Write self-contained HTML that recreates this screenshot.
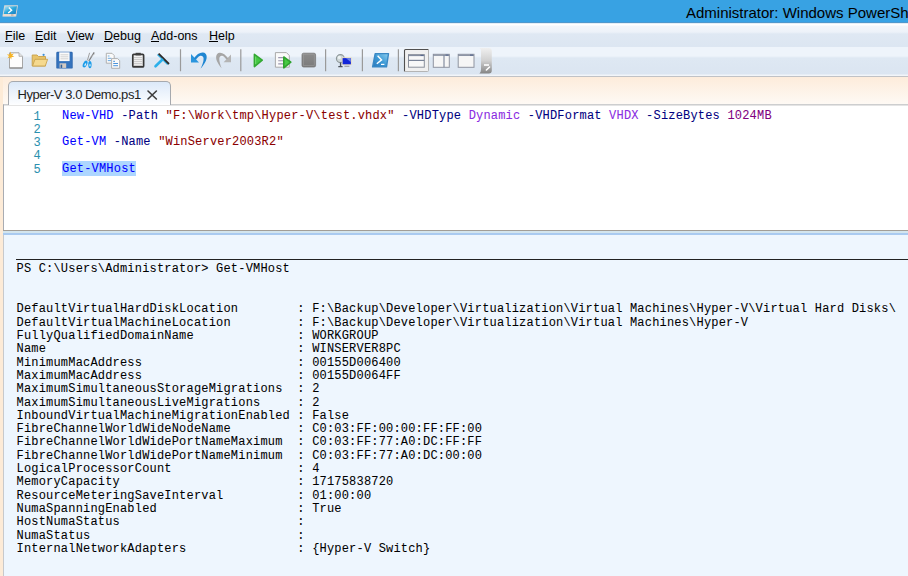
<!DOCTYPE html>
<html><head><meta charset="utf-8">
<style>
*{margin:0;padding:0;box-sizing:border-box}
html,body{width:908px;height:576px;overflow:hidden;background:#eef6fe;position:relative;font-family:"Liberation Sans",sans-serif}
.abs{position:absolute}
#title{left:0;top:0;width:908px;height:22px;background:linear-gradient(#38a2e3 0,#38a2e3 21px,#33a2ea 22px)}
#title .bl{left:0;top:22px;width:908px;height:1px;background:#4f98cc}
#titletext{left:686px;top:2.5px;font-size:15px;color:#000;white-space:nowrap;line-height:20px}
#menubar{left:0;top:23px;width:908px;height:24px;background:linear-gradient(#c9dcec 0px,#ffffff 1px,#ffffff 2px,#f2f6fb 3px,#edf2f9 9px,#dfe8f3 11px,#dce6f2 24px)}
#menubar span{position:absolute;top:6px;font-size:12.5px;line-height:15px;color:#000}
#menubar u{text-decoration:none;background:linear-gradient(#000,#000) no-repeat 0 12px/100% 1px}
#toolbar{left:0;top:47px;width:908px;height:29px;background:linear-gradient(#eef4fb 0px,#eef4fb 9px,#dee8f3 11px,#dbe5f1 27px,#f2f5f9 28px)}
#tbline{left:0;top:76px;width:908px;height:1px;background:#c0c2c6}
#tabarea{left:0;top:77px;width:908px;height:28px;background:linear-gradient(#fdecdb,#fefaf5)}
#lband{left:0;top:77px;width:3px;height:500px;background:#fdebd7}
#tab{left:8px;top:81px;width:163px;height:24px;border:1px solid #a6a9ae;border-bottom:none;border-radius:5px 5px 0 0;background:linear-gradient(#dce9f9,#fdfeff)}
#tabtext{left:17.5px;top:88px;font-size:13px;line-height:14px;color:#1e1e1e;white-space:nowrap;letter-spacing:-0.45px}
#tabx{left:147px;top:90px;width:11px;height:10px}
#edborder{left:3px;top:104px;width:905px;height:126px;border-top:1px solid #cdcecf;border-left:1px solid #a9acb2;background:#fff;box-shadow:inset 0 1px 0 #e4e4e4}
#edgap{left:9px;top:104px;width:161px;height:1px;background:#fdfeff}
#split1{left:3px;top:230px;width:905px;height:1px;background:#a29e97}
#split2{left:3px;top:231px;width:905px;height:2px;background:#d3e5ee}
#split3{left:3px;top:233px;width:905px;height:2px;background:#a9caf0}
#outpane{left:3px;top:235px;width:905px;height:341px;border-left:1px solid #c7c9cc;background:#eef6fe}
pre{font-family:"Liberation Mono",monospace;font-size:12px;letter-spacing:0.19px;white-space:pre;position:absolute;-webkit-text-stroke:0.05px}
#lnums{left:20px;top:110.5px;line-height:13.25px;color:#2b91af;text-align:right;width:21px}
#code{left:62px;top:109.5px;line-height:13.25px;color:#000}
.cmd{color:#0000ff}.par{color:#000080}.str{color:#8b0000}.enm{color:#8a2be2}.num{color:#800080}
.sel{background:#add6ff;padding:1px 0 0 0}
#hr{left:16px;top:259px;width:892px;height:1px;background:#222}
#out{left:16.5px;top:263.4px;line-height:13.31px;color:#000}
</style></head><body>
<div id="title" class="abs"><div class="abs bl"></div></div>
<div id="titletext" class="abs">Administrator: Windows PowerShell ISE</div>
<div id="menubar" class="abs">
<span style="left:5px"><u>F</u>ile</span>
<span style="left:35px"><u>E</u>dit</span>
<span style="left:67px"><u>V</u>iew</span>
<span style="left:104px"><u>D</u>ebug</span>
<span style="left:151px"><u>A</u>dd-ons</span>
<span style="left:209px"><u>H</u>elp</span>
</div>
<div id="toolbar" class="abs"></div>
<div id="tbline" class="abs"></div>
<div id="tabarea" class="abs"></div>
<div id="edborder" class="abs"></div>
<div id="outpane" class="abs"></div>
<div id="split1" class="abs"></div>
<div id="split2" class="abs"></div>
<div id="split3" class="abs"></div>
<div id="lband" class="abs"></div>
<div id="tab" class="abs"></div>
<div id="edgap" class="abs"></div>
<div id="tabtext" class="abs">Hyper-V 3.0 Demo.ps1</div>
<pre id="lnums">1
2
3
4
5</pre>
<pre id="code"><span class="cmd">New-VHD</span> <span class="par">-Path</span> <span class="str">"F:\Work\tmp\Hyper-V\test.vhdx"</span> <span class="par">-VHDType</span> <span class="enm">Dynamic</span> <span class="par">-VHDFormat</span> <span class="enm">VHDX</span> <span class="par">-SizeBytes</span> <span class="num">1024MB</span>

<span class="cmd">Get-VM</span> <span class="par">-Name</span> <span class="str">"WinServer2003R2"</span>

<span class="cmd sel">Get-VMHost</span></pre>
<!--ICONS--><svg class="abs" style="left:0;top:0" width="908" height="576" viewBox="0 0 908 576">
<defs>
<linearGradient id="psg" x1="1" y1="0" x2="0" y2="1"><stop offset="0" stop-color="#8fd0f0"/><stop offset="0.5" stop-color="#3d9ad6"/><stop offset="1" stop-color="#2a78bc"/></linearGradient>
<linearGradient id="tig" x1="0" y1="0" x2="1" y2="1"><stop offset="0" stop-color="#bfe8f8"/><stop offset="0.5" stop-color="#2aa8dc"/><stop offset="1" stop-color="#1a7cc0"/></linearGradient>
<linearGradient id="grip" x1="0" y1="0" x2="0" y2="1"><stop offset="0" stop-color="#f0f0f0"/><stop offset="0.5" stop-color="#d0d0d0"/><stop offset="1" stop-color="#858585"/></linearGradient>
<linearGradient id="stopg" x1="0" y1="0" x2="0" y2="1"><stop offset="0" stop-color="#8c8c8c"/><stop offset="1" stop-color="#7a7a7a"/></linearGradient>
</defs>
<!-- title icon -->
<path d="M4.3 5.3 H18 L16.2 16.6 H2.4 Z" fill="#dcd8d4"/>
<path d="M5.1 6.2 H17 L15.7 14 H3.7 Z" fill="url(#tig)"/>
<path d="M3.3 14.2 H15.7 L15.4 16.2 H2.9 Z" fill="#eadbd0"/>
<path d="M11 15 H13.5" stroke="#9a8f88" stroke-width="0.8"/>
<path d="M8.8 7.4 L11.6 10.2 L8.2 13" fill="none" stroke="#fff" stroke-width="1.4"/>
<!-- new -->
<path d="M9.5 52.8 H19 L22.5 56.3 V68 H9.5 Z" fill="#fdfdfd" stroke="#a6a6a6" stroke-width="1"/>
<path d="M19 52.8 V56.3 H22.5" fill="#e6e6e6" stroke="#a6a6a6" stroke-width="0.8"/>
<path d="M9.5 68 H22.5" stroke="#8c8c8c" stroke-width="1.2"/>
<path d="M10.6 51.6 L11.4 54.2 L14 53.4 L12.2 55.4 L14.4 57 L11.6 57 L11.2 59.6 L10 57.3 L7.4 58.4 L9 56 L6.8 54.6 L9.6 54.4 Z" fill="#f6b324"/>
<!-- open -->
<path d="M32.2 55 H37 L38.5 56.5 H45.5 V66 H32.2 Z" fill="#e8c46a" stroke="#c7a04a" stroke-width="0.9"/>
<path d="M32.5 66 L35 59.3 H47.6 L45.3 66 Z" fill="#f5d98e" stroke="#c9a450" stroke-width="0.9"/>
<circle cx="43.6" cy="54.8" r="1.1" fill="#3d8fd6"/>
<!-- save -->
<rect x="56.3" y="51.8" width="16.4" height="16.8" rx="1.2" fill="#2c65ad"/>
<rect x="57.2" y="52.6" width="14.6" height="15.2" fill="#3573bd"/>
<rect x="59.2" y="52.3" width="10.4" height="8.8" fill="#fbfbfb"/>
<path d="M60.5 54.8 H68.3 M60.5 56.8 H68.3 M60.5 58.8 H68.3" stroke="#c6c6c6" stroke-width="0.8"/>
<rect x="59.6" y="63.3" width="6.6" height="4.6" fill="#d4cbc3"/>
<rect x="60.6" y="64.6" width="1.6" height="3.3" fill="#2f5f9c"/>
<!-- cut -->
<path d="M88.8 61 L94.2 52.4" stroke="#7c7c7c" stroke-width="1.2"/>
<path d="M87.4 60.4 L89.6 52.8" stroke="#a0a0a0" stroke-width="1"/>
<path d="M90.4 56.8 L95 53.6" stroke="#b8b8b8" stroke-width="0.7"/>
<ellipse cx="85.1" cy="64" rx="2" ry="3.7" transform="rotate(25 85.1 64)" fill="#1c9ce9"/>
<ellipse cx="89.9" cy="64.6" rx="1.7" ry="3.6" fill="#1c9ce9"/>
<ellipse cx="85.3" cy="64.6" rx="0.7" ry="1.5" transform="rotate(25 85.3 64.6)" fill="#d8f0fc"/>
<ellipse cx="90" cy="65.2" rx="0.6" ry="1.4" fill="#d8f0fc"/>
<!-- copy -->
<path d="M106.3 53.3 H112 L114.2 55.5 V63.2 H106.3 Z" fill="#fbfbfb" stroke="#a9a9a9" stroke-width="0.9"/>
<path d="M107.8 56 H109.5 M107.8 58.3 H111.5 M107.8 60.6 H111.5" stroke="#5aa0e0" stroke-width="0.9"/>
<path d="M111.6 58.6 H117.6 L119.7 60.7 V68.3 H111.6 Z" fill="#fbfbfb" stroke="#a9a9a9" stroke-width="0.9"/>
<path d="M113.2 61.3 H115 M113.2 63.5 H118 M113.2 65.7 H118" stroke="#4a94dc" stroke-width="1"/>
<!-- paste -->
<rect x="132.8" y="54.3" width="10.8" height="12.6" rx="1" fill="#f3f3f3" stroke="#383838" stroke-width="1.7"/>
<rect x="135.6" y="52.8" width="5.2" height="2.6" fill="#404040"/>
<path d="M134 57.6 H142.4 M134 59.6 H142.4 M134 61.6 H142.4 M134 63.6 H142.4 M134 65.4 H142.4" stroke="#bdbdbd" stroke-width="0.8"/>
<!-- clear -->
<path d="M157.5 54.6 L167.7 64.6" stroke="#2fb2ea" stroke-width="1.4"/>
<path d="M158.6 53.6 L169 64" stroke="#2a2a2a" stroke-width="1.8"/>
<path d="M162.2 59.8 L155.5 66.3" stroke="#2cb0ea" stroke-width="2.6" stroke-linecap="round"/>
<!-- separators -->
<path d="M180.5 49.3 V71.3 M240.8 49.3 V71.3 M325.6 49.3 V71.3 M362.4 49.3 V71.3 M398.4 49.3 V71.3" stroke="#9a9a9a" stroke-width="1.2"/>
<!-- undo -->
<path d="M191 54 L191 62.6 L199 62.6 Z" fill="#2a95de"/>
<path d="M193.8 58.6 C196.5 54.5, 200 52.3, 203 52.6 C207 53, 207.5 57.5, 205.8 61 C204.5 63.8, 202.5 66.5, 200.6 68.6 C202 65.5, 203.8 61.5, 203.6 58.5 C203.4 56, 201.5 55.3, 199.8 56 C198.5 56.5, 197 58, 196 59.6 Z" fill="#1f86d2"/>
<!-- redo -->
<path d="M231 54.4 L231 62.3 L223.6 62.3 Z" fill="#b4b4b4"/>
<path d="M228.3 58.6 C225.7 54.6, 222.4 52.4, 219.6 52.7 C215.8 53.1, 215.6 57.6, 216.9 61 C218.1 63.8, 220 66.4, 221.6 68.3 C220.5 65.3, 219.1 61.4, 219.3 58.5 C219.6 56, 221.3 55.4, 222.8 56 C224 56.5, 225.5 58, 226.4 59.6 Z" fill="#a6a6a6"/>
<!-- run -->
<path d="M254.4 54.4 L262.2 60.2 L254.4 66.6 Z" fill="#45c843" stroke="#32a832" stroke-width="1.6" stroke-linejoin="round"/><path d="M255.6 56.6 L255.6 64" stroke="#7ee07a" stroke-width="0.8"/>
<!-- run selection -->
<path d="M275.4 52.6 H286.4 L289.3 55.5 V67.2 H275.4 Z" fill="#fafafa" stroke="#a2a2a2" stroke-width="0.9"/>
<path d="M278.2 57.6 H284 M278.2 60.8 H284 M278.2 63.9 H284" stroke="#9c98b0" stroke-width="1.1"/>
<path d="M283.8 57 L290.8 62.2 L283.8 67.8 Z" fill="#47ca42" stroke="#2fa22f" stroke-width="1.6" stroke-linejoin="round"/>
<!-- stop -->
<rect x="302" y="53.2" width="13.6" height="13.8" rx="1.6" fill="url(#stopg)" stroke="#7a7a7a" stroke-width="0.8"/>
<rect x="303.4" y="54.6" width="10.8" height="11" fill="none" stroke="#9a9a9a" stroke-width="0.6"/>
<!-- remote -->
<circle cx="340.4" cy="58.6" r="4" fill="#cdd6d8" stroke="#8e989a" stroke-width="1.1"/><circle cx="339.4" cy="57.4" r="1.6" fill="#eef4f4"/>
<path d="M340.6 62.5 V66.3 M338.3 66.6 H342.6" stroke="#4a5058" stroke-width="1.4"/>
<rect x="341.8" y="57.3" width="9.9" height="7.8" fill="#e8dcc0"/>
<rect x="342.6" y="58.1" width="8.3" height="6.2" fill="#1226d8"/>
<path d="M346 58.3 L350.8 62 V58.1 Z" fill="#6f86ea"/>
<path d="M344.4 66.3 H349.4" stroke="#a0a0a0" stroke-width="1.2"/>
<!-- powershell -->
<path d="M375.2 53.6 H388.5 L386.5 66.9 H372.6 Z" fill="url(#psg)" stroke="#3a88c4" stroke-width="1.4" stroke-linejoin="round"/>
<path d="M377.6 55.8 L381.6 59.9 L376.8 63.8" fill="none" stroke="#fff" stroke-width="1.4"/>
<path d="M381 64.4 H384.4" stroke="#fff" stroke-width="1.2"/>
<!-- layout pressed -->
<rect x="404.5" y="49.5" width="24" height="22" rx="1" fill="#f0f0f0"/>
<path d="M404.5 71.5 V50.5 Q404.5 49.5, 405.5 49.5 H428.5" fill="none" stroke="#505050" stroke-width="1.1"/>
<path d="M428.5 49.5 V70.5 Q428.5 71.5, 427.5 71.5 H404.5" fill="none" stroke="#b4b4b4" stroke-width="1"/>
<rect x="408.5" y="54.6" width="15.8" height="12.6" fill="#f8f8f8" stroke="#8a909c" stroke-width="1"/>
<path d="M408.5 55.6 H424.3" stroke="#7a8498" stroke-width="1"/>
<path d="M420.5 55.4 H423.5" stroke="#5a6a90" stroke-width="1.2"/>
<path d="M408.5 60.4 H424.3" stroke="#7a8498" stroke-width="1.2"/>
<!-- layout 2 -->
<rect x="433.3" y="54.3" width="16" height="13" fill="#f6f6f6" stroke="#8f94a0" stroke-width="1"/>
<path d="M433.3 55.3 H449.3 M444 55.5 V67.3" stroke="#7a8498" stroke-width="1.1"/>
<path d="M445.5 55.1 H448.5" stroke="#5a6a90" stroke-width="1.2"/>
<!-- layout 3 -->
<rect x="458.2" y="54.3" width="15.8" height="13" fill="#f6f6f6" stroke="#8f94a0" stroke-width="1"/>
<path d="M458.2 55.3 H474" stroke="#7a8498" stroke-width="1.1"/>
<path d="M470 55.1 H473" stroke="#5a6a90" stroke-width="1.2"/>
<!-- overflow grip -->
<path d="M479.4 48 H488.6 Q491.8 48, 491.8 51.2 V70.4 Q491.8 73.4, 488.8 73.4 H479.4 Q481 72, 481 69.5 V50.5 Q481 48.6, 479.4 48 Z" fill="url(#grip)"/>
<rect x="484" y="64.2" width="5" height="1.6" fill="#fff"/>
<path d="M486.4 70 L489.6 67" stroke="#fff" stroke-width="1.6" stroke-linecap="round"/>
<!-- tab close -->
<path d="M148 91 L156.4 99 M156.4 91 L148 99" stroke="#3c3c3c" stroke-width="1.6" stroke-linecap="round"/>
</svg><!--/ICONS-->
<div id="hr" class="abs"></div>
<pre id="out">PS C:\Users\Administrator&gt; Get-VMHost


DefaultVirtualHardDiskLocation        : F:\Backup\Developer\Virtualization\Virtual Machines\Hyper-V\Virtual Hard Disks\
DefaultVirtualMachineLocation         : F:\Backup\Developer\Virtualization\Virtual Machines\Hyper-V
FullyQualifiedDomainName              : WORKGROUP
Name                                  : WINSERVER8PC
MinimumMacAddress                     : 00155D006400
MaximumMacAddress                     : 00155D0064FF
MaximumSimultaneousStorageMigrations  : 2
MaximumSimultaneousLiveMigrations     : 2
InboundVirtualMachineMigrationEnabled : False
FibreChannelWorldWideNodeName         : C0:03:FF:00:00:FF:FF:00
FibreChannelWorldWidePortNameMaximum  : C0:03:FF:77:A0:DC:FF:FF
FibreChannelWorldWidePortNameMinimum  : C0:03:FF:77:A0:DC:00:00
LogicalProcessorCount                 : 4
MemoryCapacity                        : 17175838720
ResourceMeteringSaveInterval          : 01:00:00
NumaSpanningEnabled                   : True
HostNumaStatus                        :
NumaStatus                            :
InternalNetworkAdapters               : {Hyper-V Switch}</pre>
</body></html>
